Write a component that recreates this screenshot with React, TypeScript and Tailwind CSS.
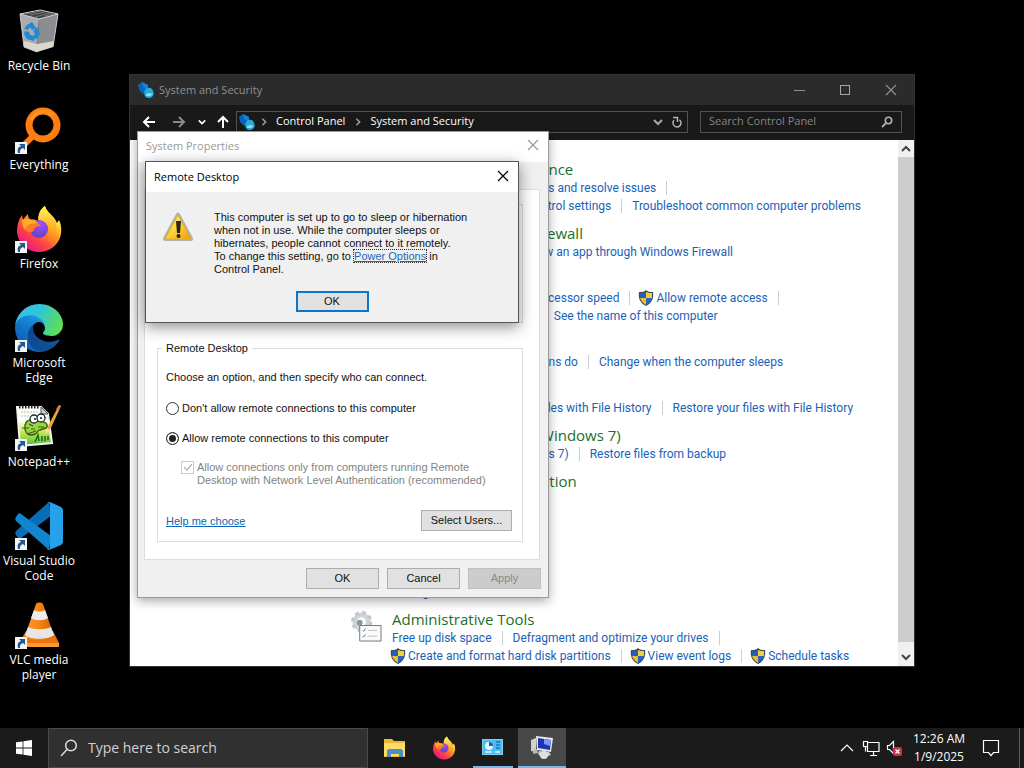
import React from 'react'

type IconProps = { className?: string }

type TaskLink = {
  label: string
  shield?: boolean
}

type Category = {
  title: string
  rows: TaskLink[][]
  trailing?: number[]
}

const categories: Category[] = [
  {
    title: 'Security and Maintenance',
    rows: [
      [{ label: "Review your computer's status and resolve issues" }],
      [
        { label: 'Change User Account Control settings', shield: true },
        { label: 'Troubleshoot common computer problems' },
      ],
    ],
    trailing: [0],
  },
  {
    title: 'Windows Defender Firewall',
    rows: [[{ label: 'Check firewall status' }, { label: 'Allow an app through Windows Firewall' }]],
  },
  {
    title: 'System',
    rows: [
      [
        { label: 'View amount of RAM and processor speed' },
        { label: 'Allow remote access', shield: true },
      ],
      [{ label: 'Launch remote assistance' }, { label: 'See the name of this computer' }],
    ],
    trailing: [0],
  },
  {
    title: 'Power Options',
    rows: [[{ label: 'Change what the power buttons do' }, { label: 'Change when the computer sleeps' }]],
  },
  {
    title: 'File History',
    rows: [
      [
        { label: 'Save backup copies of your files with File History' },
        { label: 'Restore your files with File History' },
      ],
    ],
  },
  {
    title: 'Backup and Restore (Windows 7)',
    rows: [[{ label: 'Backup and Restore (Windows 7)' }, { label: 'Restore files from backup' }]],
  },
  {
    title: 'BitLocker Drive Encryption',
    rows: [[{ label: 'Manage BitLocker' }]],
  },
  {
    title: 'Storage Spaces',
    rows: [[{ label: 'Manage Storage Spaces' }]],
  },
  {
    title: 'Work Folders',
    rows: [[{ label: 'Manage Work Folders' }]],
  },
  {
    title: 'Administrative Tools',
    rows: [
      [{ label: 'Free up disk space' }, { label: 'Defragment and optimize your drives' }],
      [
        { label: 'Create and format hard disk partitions', shield: true },
        { label: 'View event logs', shield: true },
        { label: 'Schedule tasks', shield: true },
      ],
    ],
    trailing: [0],
  },
]

const RecycleBinIcon = ({ className }: IconProps) => (
  <svg viewBox="0 0 48 48" className={className} aria-hidden="true">
    <path d="M5 7 24 12 22 45 9 40Z" fill="#a9abad" />
    <path d="M24 12 43 7 38 40 22 45Z" fill="#8b8d90" />
    <path d="M5 7 25 3 43 7 24 12Z" fill="#3f4143" stroke="#d4d6d8" strokeWidth="1" />
    <path d="m10 7 15-3m-10 4 15-3m-10 5 15-4M30 9l8-2" stroke="#75787b" strokeWidth="1" />
    <path d="m9 34 13 3 17-3-1 6-16 5-13-5Z" fill="#d9d8cf" />
    <path d="m12 18 5-3 4 6-4 2-2-3-2 3-4-1ZM22 20l3 7-3 5-4-1 2-4-2-3ZM10 24l4 1 1 3 5 1-1 5-7-2-3-5Z" fill="#2088d4" />
    <path d="M5 7 9 40 22 45M43 7l-5 33" fill="none" stroke="#c8cacc" strokeWidth="1" />
  </svg>
)

const EverythingIcon = ({ className }: IconProps) => (
  <svg viewBox="0 0 48 48" className={className} aria-hidden="true">
    <path d="M20 28 6 42" stroke="#ff7e0d" strokeWidth="6" />
    <circle cx="28" cy="19" r="14" fill="none" stroke="#ff7e0d" strokeWidth="7" />
    <path d="M16 14a14 14 0 0 1 22-5" fill="none" stroke="#ff9429" strokeWidth="3" />
  </svg>
)

const FirefoxIcon = ({ className }: IconProps) => (
  <svg viewBox="0 0 48 48" className={className} aria-hidden="true">
    <defs>
      <linearGradient id="ff-body" x1="0.85" y1="0.1" x2="0.2" y2="0.95">
        <stop offset="0.1" stopColor="#fff04a" />
        <stop offset="0.4" stopColor="#ff9a1f" />
        <stop offset="0.7" stopColor="#ff4048" />
        <stop offset="1" stopColor="#e31587" />
      </linearGradient>
      <radialGradient id="ff-globe" cx="0.6" cy="0.2" r="0.9">
        <stop offset="0" stopColor="#a14df0" />
        <stop offset="1" stopColor="#5a40cf" />
      </radialGradient>
      <linearGradient id="ff-tail" x1="0.5" y1="0" x2="0.6" y2="1">
        <stop offset="0" stopColor="#fff44f" />
        <stop offset="1" stopColor="#ff8f1e" />
      </linearGradient>
    </defs>
    <path
      d="M30 1c1 6 9 9 12 17l2-3c3 6 3 14 0 20C40 43 32 47 24 47 12 47 3 38 2 27c0-6 1-11 5-17l1 5c1-2 3-4 5-6 0 3 1 5 3 6 3-1 5 0 7 1 0-7 2-12 7-15Z"
      fill="url(#ff-body)"
    />
    <path d="M30 1c-5 4-7 9-6 14 10 2 16 9 13 18 4-3 5-8 4-13C40 12 32 8 30 1Z" fill="url(#ff-tail)" />
    <circle cx="24" cy="24" r="9" fill="url(#ff-globe)" />
    <path d="M7 15c5-2 11-1 16 3l3 3c-4 0-6 1-7 4-1 2-3 3-6 2-4-2-6-7-6-12Z" fill="#ff7b24" />
    <path d="M7 15c5-2 11-1 16 3l-8 1c-3 1-4 3-5 6-2-3-3-6-3-10Z" fill="#ffac2b" />
  </svg>
)

const EdgeIcon = ({ className }: IconProps) => (
  <svg viewBox="0 0 256 256" className={className} aria-hidden="true">
    <defs>
      <linearGradient id="edge-a" x1="0.2" y1="0.5" x2="1" y2="0.6">
        <stop offset="0" stopColor="#0c4a91" />
        <stop offset="1" stopColor="#145299" />
      </linearGradient>
      <linearGradient id="edge-b" x1="0.8" y1="0.1" x2="0.3" y2="1">
        <stop offset="0" stopColor="#1b9de2" />
        <stop offset="0.5" stopColor="#1472c8" />
        <stop offset="1" stopColor="#0a5bb0" />
      </linearGradient>
      <linearGradient id="edge-c" x1="0" y1="0.3" x2="1" y2="0.6">
        <stop offset="0" stopColor="#35c1f1" />
        <stop offset="0.45" stopColor="#2fc5d8" />
        <stop offset="1" stopColor="#5fe04e" />
      </linearGradient>
    </defs>
    <g transform="translate(-4.63 -4.92)">
      <path
        d="M235.68 195.46a93.73 93.73 0 0 1-10.54 4.71 101.87 101.87 0 0 1-35.9 6.46c-47.32 0-88.54-32.55-88.54-74.32A31.48 31.48 0 0 1 117.13 105c-42.8 1.8-53.8 46.4-53.8 72.53 0 73.88 68.09 81.37 82.76 81.37 7.91 0 19.84-2.3 27-4.56l1.31-.44a128.34 128.34 0 0 0 66.6-52.8 4 4 0 0 0-5.32-5.64Z"
        fill="url(#edge-a)"
      />
      <path
        d="M110.34 246.34A79.2 79.2 0 0 1 87.6 225a80.72 80.72 0 0 1 29.53-120c3.12-1.47 8.45-4.13 15.54-4a32.35 32.35 0 0 1 25.69 13 31.88 31.88 0 0 1 6.36 18.66c0-.21 24.46-79.6-80-79.6-43.9 0-80 41.66-80 78.21a130.15 130.15 0 0 0 12.11 56 128 128 0 0 0 156.38 67.11 75.55 75.55 0 0 1-62.78-8Z"
        fill="url(#edge-b)"
      />
      <path
        d="M156.94 153.78c-.81 1.05-3.3 2.5-3.3 5.66 0 2.61 1.7 5.12 4.72 7.23 14.38 10 41.49 8.68 41.56 8.68a59.56 59.56 0 0 0 30.27-8.35 61.38 61.38 0 0 0 30.43-52.88c.26-22.41-8-37.31-11.34-43.91C228.09 28.76 182.35 5 132.61 5a128 128 0 0 0-128 126.2c.48-36.54 36.8-66.05 80-66.05 3.5 0 23.46.34 42 10.07 16.34 8.58 24.9 18.94 30.85 29.21 6.18 10.67 7.28 24.15 7.28 29.52s-2.74 13.33-7.8 19.83Z"
        fill="url(#edge-c)"
      />
    </g>
  </svg>
)

const NotepadIcon = ({ className }: IconProps) => (
  <svg viewBox="0 0 48 48" className={className} aria-hidden="true">
    <defs>
      <linearGradient id="npp-page" x1="0" y1="0" x2="0" y2="1">
        <stop offset="0.35" stopColor="#fdfff6" />
        <stop offset="0.65" stopColor="#c4e84e" />
        <stop offset="1" stopColor="#4cb843" />
      </linearGradient>
    </defs>
    <path d="M2 4h24l7 7 4 29-32 3Z" fill="url(#npp-page)" stroke="#f4f4f4" strokeWidth="2" />
    <path d="M26 4v7h7Z" fill="#d0d0d0" stroke="#555" strokeWidth="1" />
    <path d="M4 4h21" stroke="#222" strokeWidth="3" strokeDasharray="1.5 1.5" />
    <path d="M6 9h18M6 13h8M30 15h4" stroke="#b9c3a8" strokeWidth="1" strokeDasharray="2 1" />
    <path d="M17 17c-5-1-8 4-7 9 1 6 6 7 10 5 3-1 2-4 5-4l6-2c3-2 0-6-3-6" fill="#9ad543" stroke="#3b5c14" strokeWidth="1.4" />
    <path d="M7 25h7M16 26h4M23 24h6M12 31l9-3M14 21l4 2" stroke="#3b5c14" strokeWidth="1.2" />
    <circle cx="19" cy="16" r="4" fill="#fff" stroke="#182b33" strokeWidth="1.3" />
    <circle cx="26" cy="15" r="4" fill="#fff" stroke="#182b33" strokeWidth="1.3" />
    <circle cx="20" cy="16" r="1" fill="#111" />
    <circle cx="26" cy="15" r="1" fill="#111" />
    <path d="m20 39 3-7 1 6m3-5v5m3-5v5m3-5v4" fill="none" stroke="#1f6a22" strokeWidth="1.5" />
    <path d="m30 32 2-7L44 2l2 1-11 24Z" fill="#e8a834" />
    <path d="m44 2 2 1-2 4-3-1Z" fill="#c97b68" />
    <path d="m30 32 2-7 3 2Z" fill="#f1dfae" />
  </svg>
)

const CodeIcon = ({ className }: IconProps) => (
  <svg viewBox="0 0 48 48" className={className} aria-hidden="true">
    <path d="M1 33c-1-1-1-3 0-4L34 0l2 14L6 36c-1 1-2 1-3 0Z" fill="#0b6db5" />
    <path d="M1 15c-1 1-1 3 0 4l33 29 2-14L6 12c-1-1-2-1-3 0Z" fill="#1185d0" />
    <path d="M34 48c-1 0-2 0-2-1 2 1 3 0 3-2V3c0-2-1-3-3-2 0-1 2-1 3-1l11 5c1 1 2 2 2 3v32c0 1-1 2-2 3Z" fill="#26a2ec" />
  </svg>
)

const VlcIcon = ({ className }: IconProps) => (
  <svg viewBox="0 0 48 48" className={className} aria-hidden="true">
    <defs>
      <linearGradient id="vlc-cone" x1="0" y1="0" x2="1" y2="0">
        <stop offset="0" stopColor="#ff9a2e" />
        <stop offset="0.4" stopColor="#f98a12" />
        <stop offset="1" stopColor="#d9610a" />
      </linearGradient>
    </defs>
    <path d="M11 30h27l6 12v4H4v-4Z" fill="#e8740b" />
    <path d="M4 42h40v4H4Z" fill="#fb9a33" />
    <path d="M21 3c1-2 6-2 7 0l11 32c-3 5-26 5-29 0Z" fill="url(#vlc-cone)" />
    <path d="M19 9c3 2 8 2 11 0l3 8c-4 3-13 3-17 0Z" fill="#ececec" />
    <path d="M13 26c6 3 17 3 23 0l3 8c-5 5-24 5-29 0Z" fill="#e6e6e6" />
  </svg>
)

const ShortcutArrow = () => (
  <svg viewBox="0 0 12 12" className="absolute bottom-0 left-0 size-3 bg-[#f4f4f4]" aria-hidden="true">
    <path d="M3 11c-1-4 0-6 3-7L4 2h6v6L8 6c-3 1-3 3-3 5Z" fill="#24588f" />
  </svg>
)

const SecurityIcon = ({ className }: IconProps) => (
  <svg viewBox="0 0 16 16" className={className} aria-hidden="true">
    <path d="M0 3 4 0l6 3v6l-5 3-4-4Z" fill="#0a62b5" />
    <path d="m4 0 6 3v5L5 5Z" fill="#1a80d6" />
    <path d="M7 8c2-3 7-3 8 1 2 4-1 7-4 7-4 0-6-4-4-8Z" fill="#1fb0e0" />
    <path d="m12 7-1 4 4 1-3 2H8v-2l3-1Z" fill="#86e3f4" />
  </svg>
)

const ShieldIcon = ({ className }: IconProps) => (
  <svg viewBox="0 0 16 16" className={className} aria-hidden="true">
    <path d="M8 0c2 2 4 2 7 2 1 6-1 11-7 14C2 13 0 8 1 2c3 0 5 0 7-2Z" fill="#3b4a5c" />
    <path d="M8 2v6H2V3c2 0 4 0 6-1Z" fill="#2560b8" />
    <path d="M8 2c2 1 4 1 6 1v5H8Z" fill="#f5cf3a" />
    <path d="M2 8h6v7C5 13 3 11 2 8Z" fill="#e9c02c" />
    <path d="M8 8h6c-1 3-3 5-6 7Z" fill="#2a66c4" />
  </svg>
)

const AdminToolsIcon = ({ className }: IconProps) => (
  <svg viewBox="0 0 32 32" className={className} aria-hidden="true">
    <circle cx="11" cy="11" r="7" fill="none" stroke="#cdd4d8" strokeWidth="5" />
    <circle cx="11" cy="11" r="9.5" fill="none" stroke="#bfc7cc" strokeWidth="3" strokeDasharray="4 3.5" />
    <circle cx="9" cy="12" r="3" fill="#8d979c" />
    <path d="M9 15h22v16H9Z" fill="#fbfbfb" stroke="#6e7478" />
    <path d="m12 20 1 1 2-3m-3 8 1 1 2-3" fill="none" stroke="#4d7dae" />
    <path d="M17 20h10m-10 6h10" stroke="#bcc2c6" />
  </svg>
)

const WarningIcon = ({ className }: IconProps) => (
  <svg viewBox="0 0 32 32" className={className} aria-hidden="true">
    <defs>
      <linearGradient id="warn" x1="0" y1="0" x2="1" y2="1">
        <stop offset="0.3" stopColor="#ffe94a" />
        <stop offset="1" stopColor="#f59a0c" />
      </linearGradient>
    </defs>
    <path d="M14 3c1-2 3-2 4 0l13 24c0 2 0 3-2 3H3c-2 0-2-1-2-3Z" fill="#b3b3ad" />
    <path d="M16 4 29 28H3Z" fill="url(#warn)" stroke="#e0ae1a" strokeWidth="1" />
    <path d="M14 10h5l-1 12h-3Z" fill="#26241c" />
    <circle cx="16.5" cy="25" r="2" fill="#26241c" />
  </svg>
)

const ExplorerIcon = ({ className }: IconProps) => (
  <svg viewBox="0 0 24 24" className={className} aria-hidden="true">
    <path d="M1 3h8l2 2h11v16H1Z" fill="#e9b93a" />
    <path d="M1 7h21v13H1Z" fill="#ffdc66" />
    <path d="M4 21v-6c0-1 1-2 2-2h12c1 0 2 1 2 2v6h-4v-3H8v3Z" fill="#4a8fc8" />
  </svg>
)

const ControlPanelIcon = ({ className }: IconProps) => (
  <svg viewBox="0 0 24 24" className={className} aria-hidden="true">
    <path d="M1 4h21v16H1Z" fill="#7fd0f5" />
    <path d="M2 5h19v14H2Z" fill="#4dbcf0" />
    <circle cx="8" cy="11" r="4" fill="#e8f8ff" />
    <path d="M8 7v4h4a4 4 0 0 0-4-4Z" fill="#1462a0" />
    <path d="M15 7h4M15 10h4M15 13h4" stroke="#1878b8" strokeWidth="1.5" />
    <path d="M4 17h7M14 17h5" stroke="#d9f3ff" strokeWidth="1.5" />
  </svg>
)

const SystemIcon = ({ className }: IconProps) => (
  <svg viewBox="0 0 24 24" className={className} aria-hidden="true">
    <path d="M1 5 6 3v14l-5-1Z" fill="#cfd2cd" />
    <path d="m6 1 17 2-2 14-14-2Z" fill="#e9eae6" />
    <path d="m8 3 13 2-1 10-12-2Z" fill="#1c35b8" />
    <path d="m14 4 7 1-1 6-6-2Z" fill="#7d9af0" />
    <path d="m3 15 4-1 1 4-5 1Z" fill="#b7bab5" />
    <path d="m9 16 10 1 2 3-9 3-4-4Z" fill="#cfd2ce" />
    <circle cx="14" cy="20" r="4" fill="#dfe2de" />
  </svg>
)

const CloseGlyph = ({ className }: IconProps) => (
  <svg viewBox="0 0 12 12" className={className} aria-hidden="true">
    <path d="m1 1 10 10M11 1 1 11" fill="none" stroke="currentColor" strokeWidth="1.2" />
  </svg>
)

const Chevron = ({ className }: IconProps) => (
  <svg viewBox="0 0 10 10" className={className} aria-hidden="true">
    <path d="m1 3 4 4 4-4" fill="none" stroke="currentColor" strokeWidth="2" />
  </svg>
)

const desktopIcons = [
  { name: 'Recycle Bin', icon: RecycleBinIcon, shortcut: false },
  { name: 'Everything', icon: EverythingIcon, shortcut: true },
  { name: 'Firefox', icon: FirefoxIcon, shortcut: true },
  { name: 'Microsoft Edge', icon: EdgeIcon, shortcut: true },
  { name: 'Notepad++', icon: NotepadIcon, shortcut: true },
  { name: 'Visual Studio Code', icon: CodeIcon, shortcut: true },
  { name: 'VLC media player', icon: VlcIcon, shortcut: true },
]

const DesktopIcons = () => (
  <ul className="flex w-[78px] flex-col">
    {desktopIcons.map(({ name, icon: Icon, shortcut }) => (
      <li key={name} className="h-[99px] pt-[7px]">
        <button className="flex w-full flex-col items-center gap-[3px] text-xs leading-[15px] text-white">
          <span className="relative">
            <Icon className="size-12" />
            {shortcut && <ShortcutArrow />}
          </span>
          <span>{name}</span>
        </button>
      </li>
    ))}
  </ul>
)

const Separator = () => <span className="mx-[10px] h-3.5 w-px bg-[#c9ced6]" />

const CategorySection = ({ category }: { category: Category }) => (
  <section>
    <h2 className="mb-0.5 text-[15px] leading-4 text-[#1b6f2c]">{category.title}</h2>
    {category.rows.map((row, rowIndex) => (
      <div key={rowIndex} className="flex h-[18px] items-center font-[Roboto,sans-serif] text-xs text-[#1a62b8]">
        {row.map((link, index) => (
          <React.Fragment key={link.label}>
            {index > 0 && <Separator />}
            <a href="#" className="flex items-center gap-0.5">
              {link.shield && <ShieldIcon className="-ml-0.5 size-4" />}
              {link.label}
            </a>
          </React.Fragment>
        ))}
        {category.trailing?.includes(rowIndex) && <Separator />}
      </div>
    ))}
  </section>
)

const ControlPanelWindow = () => (
  <section
    aria-label="System and Security"
    className="absolute top-[74px] left-[129px] flex h-[593px] w-[786px] flex-col border border-[#333] bg-[#191919]"
  >
    <header className="flex h-[30px] shrink-0 items-center bg-[#2b2b2b] text-[#8f8f8f]">
      <SecurityIcon className="ml-2 size-4" />
      <h1 className="ml-[5px] flex-1 text-[11px]">System and Security</h1>
      <button aria-label="Minimize" className="flex h-full w-[46px] items-center justify-center">
        <span className="h-px w-[11px] bg-[#8f8f8f]" />
      </button>
      <button aria-label="Maximize" className="flex h-full w-[46px] items-center justify-center">
        <span className="size-[10px] border border-[#a5a5a5]" />
      </button>
      <button aria-label="Close" className="flex h-full w-[46px] items-center justify-center">
        <CloseGlyph className="size-3" />
      </button>
    </header>

    <nav className="flex h-[35px] shrink-0 items-center pr-3 pb-0.5 text-[11px] text-white">
      <button aria-label="Back" className="ml-3 size-3.5">
        <svg viewBox="0 0 14 14" aria-hidden="true">
          <path d="M13 7H2m5-5L2 7l5 5" fill="none" stroke="currentColor" strokeWidth="2" />
        </svg>
      </button>
      <button aria-label="Forward" className="ml-4 size-3.5 text-[#8a8a8a]">
        <svg viewBox="0 0 14 14" aria-hidden="true">
          <path d="M1 7h11M7 2l5 5-5 5" fill="none" stroke="currentColor" strokeWidth="2" />
        </svg>
      </button>
      <button aria-label="Recent locations" className="ml-3">
        <Chevron className="size-2" />
      </button>
      <button aria-label="Up" className="ml-2.5 size-3.5">
        <svg viewBox="0 0 14 14" aria-hidden="true">
          <path d="M7 13V2M2 7l5-5 5 5" fill="none" stroke="currentColor" strokeWidth="2" />
        </svg>
      </button>
      <div className="ml-1.5 flex h-[22px] flex-1 items-center border border-[#535353] pr-1">
        <SecurityIcon className="ml-0.5 size-4" />
        <Chevron className="ml-[5px] size-2 -rotate-90 text-[#9a9a9a]" />
        <a href="#" className="ml-2">Control Panel</a>
        <Chevron className="ml-[9px] size-2 -rotate-90 text-[#9a9a9a]" />
        <a href="#" className="ml-2 flex-1">System and Security</a>
        <button aria-label="Previous locations" className="text-[#a8a8a8]">
          <Chevron className="size-2.5" />
        </button>
        <button aria-label="Refresh" className="ml-2 size-3 text-[#b5b5b5]">
          <svg viewBox="0 0 12 12" aria-hidden="true">
            <path d="M8.5 3.8a4 4 0 1 1-5.5.5M2 1.5h4.5V6" fill="none" stroke="currentColor" strokeWidth="1.5" />
          </svg>
        </button>
      </div>
      <form className="ml-3 flex h-[22px] w-[202px] items-center border border-[#535353] pr-2 pl-2">
        <input
          aria-label="Search Control Panel"
          placeholder="Search Control Panel"
          className="w-0 flex-1 bg-transparent outline-none placeholder:text-[#858585]"
        />
        <svg viewBox="0 0 12 12" className="size-3 text-[#b0b0b0]" aria-hidden="true">
          <circle cx="7.5" cy="4.5" r="3.2" fill="none" stroke="currentColor" strokeWidth="1.6" />
          <path d="m5 7-4 4" stroke="currentColor" strokeWidth="1.8" />
        </svg>
      </form>
    </nav>

    <div className="flex min-h-0 flex-1 bg-white">
      <main className="flex flex-1 flex-col gap-2.5 overflow-hidden pt-[21px] whitespace-nowrap">
        {categories.map((category, index) => (
          <div key={category.title} className="flex">
            <div className="flex w-[262px] shrink-0 pl-[221px]">
              {index === categories.length - 1 && <AdminToolsIcon className="size-[31px]" />}
            </div>
            <CategorySection category={category} />
          </div>
        ))}
      </main>
      <div className="flex w-4 flex-col items-center bg-[#f0f0f0] text-[#454545]">
        <button aria-label="Scroll up" className="flex h-[17px] items-center">
          <Chevron className="size-2.5 rotate-180" />
        </button>
        <div className="w-full flex-1 bg-[#cdcdcd]" />
        <button aria-label="Scroll down" className="flex h-6 items-center pt-1.5">
          <Chevron className="size-2.5" />
        </button>
      </div>
    </div>
  </section>
)

const dialogButton = 'h-[21px] border border-[#adadad] bg-[#e1e1e1]'

const SystemPropertiesWindow = () => (
  <section
    role="dialog"
    aria-label="System Properties"
    className="absolute top-[131px] left-[137px] flex w-[412px] flex-col border border-[#9b9b9b] bg-[#f0f0f0] font-['Liberation_Sans',Arial,sans-serif] text-[11px] leading-[13px] text-[#111] shadow-[0_3px_10px_rgba(0,0,0,0.35)]"
  >
    <header className="flex h-[30px] items-center justify-between bg-white pr-[9px] pb-1 pl-2 text-[#999]">
      <h2 className="font-['Open_Sans','Noto_Sans',sans-serif] text-[11px]">System Properties</h2>
      <button aria-label="Close">
        <CloseGlyph className="size-3" />
      </button>
    </header>
    <div className="pt-[27px] pr-2 pl-1.5">
      <div className="flex flex-col border border-[#dcdcdc] bg-white pt-2 pr-4 pb-[17px] pl-3">
        <fieldset aria-label="Remote Assistance" className="mt-1.5 h-[119px] border border-[#dcdcdc]" />

        <fieldset className="mt-[19px] flex flex-col border border-[#dcdcdc] px-2 pb-2.5">
          <legend className="-ml-1 px-1">Remote Desktop</legend>
          <p className="mt-4">Choose an option, and then specify who can connect.</p>
          <label className="mt-[18px] flex items-center gap-[3px]">
            <input
              type="radio"
              name="remote"
              className="size-[13px] appearance-none rounded-full border border-[#333] bg-white"
            />
            Don't allow remote connections to this computer
          </label>
          <label className="mt-[17px] flex items-center gap-[3px]">
            <input
              type="radio"
              name="remote"
              defaultChecked
              className="size-[13px] appearance-none rounded-full border border-[#333] bg-white checked:bg-[#222] checked:shadow-[inset_0_0_0_2px_white]"
            />
            Allow remote connections to this computer
          </label>
          <label className="mt-4 ml-[15px] flex items-start gap-[3px] text-[#838383]">
            <span className="relative flex">
              <input type="checkbox" disabled defaultChecked className="size-[13px] appearance-none border border-[#ccc] bg-white" />
              <svg viewBox="0 0 13 13" className="absolute inset-0" aria-hidden="true">
                <path d="m3 6 3 3 5-6" fill="none" stroke="#b5b5b5" strokeWidth="1.4" />
              </svg>
            </span>
            <span>
              Allow connections only from computers running Remote
              <br />
              Desktop with Network Level Authentication (recommended)
            </span>
          </label>
          <div className="mt-[23px] flex items-center justify-between pr-0.5">
            <a href="#" className="pt-0.5 text-[#0a66b8] underline">Help me choose</a>
            <button className={`${dialogButton} w-[91px]`}>Select Users...</button>
          </div>
        </fieldset>
      </div>
    </div>
    <footer className="flex justify-end gap-2 py-2 pr-[7px]">
      <button className={`${dialogButton} w-[73px]`}>OK</button>
      <button className={`${dialogButton} w-[73px]`}>Cancel</button>
      <button disabled className="h-[21px] w-[73px] border border-[#bfbfbf] bg-[#cccccc] text-[#8a8a8a]">Apply</button>
    </footer>
  </section>
)

const RemoteDesktopAlert = () => (
  <section
    role="alertdialog"
    aria-label="Remote Desktop"
    className="absolute top-[161px] left-[145px] flex w-[374px] flex-col border border-[#555] bg-[#f0f0f0] font-['Liberation_Sans',Arial,sans-serif] text-[11px] leading-[13px] text-[#111] shadow-[0_4px_14px_rgba(0,0,0,0.45)]"
  >
    <header className="flex h-[30px] items-center justify-between bg-white pr-[9px] pb-0.5 pl-2 text-black">
      <h2 className="font-['Open_Sans','Noto_Sans',sans-serif] text-[11px]">Remote Desktop</h2>
      <button aria-label="Close">
        <CloseGlyph className="size-3" />
      </button>
    </header>
    <div className="flex gap-5 pt-[19px] pl-4">
      <WarningIcon className="size-8" />
      <p>
        This computer is set up to go to sleep or hibernation
        <br />
        when not in use. While the computer sleeps or
        <br />
        hibernates, people cannot connect to it remotely.
        <br />
        To change this setting, go to{' '}
        <a href="#" className="text-[#1a66c0] underline outline-1 outline-dotted outline-[#333]">Power Options</a> in
        <br />
        Control Panel.
      </p>
    </div>
    <button className="mt-[15px] mb-2.5 h-[21px] w-[73px] self-center border-2 border-[#0b74cc] bg-[#e1e1e1]">OK</button>
  </section>
)

const Taskbar = () => (
  <footer className="flex h-10 shrink-0 items-stretch bg-[#1b1b1b] text-white">
    <button aria-label="Start" className="flex w-12 items-center justify-center">
      <svg viewBox="0 0 16 16" className="size-4" aria-hidden="true">
        <path d="M0 2.3 6.6 1.4v6.2H0ZM7.4 1.3 16 0v7.6H7.4ZM0 8.4h6.6v6.2L0 13.7ZM7.4 8.4H16V16l-8.6-1.3Z" fill="#fff" />
      </svg>
    </button>
    <label className="flex w-80 items-center gap-2.5 border border-[#4a4a4a] bg-[#303030] pl-[11px]">
      <svg viewBox="0 0 18 18" className="size-[18px]" aria-hidden="true">
        <circle cx="11" cy="6.5" r="5.3" fill="none" stroke="#dcdcdc" strokeWidth="1.5" />
        <path d="m7 10.5-6 6.5" stroke="#dcdcdc" strokeWidth="1.5" />
      </svg>
      <input
        aria-label="Search"
        placeholder="Type here to search"
        className="w-0 flex-1 bg-transparent text-sm outline-none placeholder:text-[#d0d0d0]"
      />
    </label>
    <div className="ml-[3px] flex flex-1 gap-px">
      <button aria-label="File Explorer" className="flex w-12 items-center justify-center">
        <ExplorerIcon className="size-6" />
      </button>
      <button aria-label="Firefox" className="flex w-12 items-center justify-center">
        <FirefoxIcon className="size-6" />
      </button>
      <button aria-label="Control Panel" className="flex w-12 flex-col items-center">
        <ControlPanelIcon className="my-auto size-6" />
        <span className="h-0.5 w-10 bg-[#76b9ed]" />
      </button>
      <button aria-label="System Properties" className="flex w-12 flex-col items-center bg-[#484848]">
        <SystemIcon className="my-auto size-6" />
        <span className="h-0.5 w-full bg-[#76b9ed]" />
      </button>
    </div>
    <div className="flex items-center">
      <button aria-label="Show hidden icons">
        <svg viewBox="0 0 14 14" className="size-3.5" aria-hidden="true">
          <path d="m1 10 6-6 6 6" fill="none" stroke="#fff" strokeWidth="1.2" />
        </svg>
      </button>
      <button aria-label="Network" className="ml-2">
        <svg viewBox="0 0 18 18" className="size-[18px]" aria-hidden="true">
          <path d="M5 3.5h12v9H5.5V8M8 16.5h7M11.5 12.5v4M1.5 2.5h4v5h-4ZM3.5 7.5v5" fill="none" stroke="#fff" strokeWidth="1.2" />
        </svg>
      </button>
      <button aria-label="Volume muted" className="ml-1.5">
        <svg viewBox="0 0 18 18" className="size-[18px]" aria-hidden="true">
          <path d="M1.5 6.5h2l4-4v12l-4-4h-2Z" fill="none" stroke="#fff" strokeWidth="1.2" />
          <rect x="7" y="8" width="9" height="9" rx="2" fill="#d42b3c" />
          <path d="m9.5 10.5 4 4m0-4-4 4" stroke="#fff" strokeWidth="1.4" />
        </svg>
      </button>
      <div className="ml-2 w-[54px] text-center text-xs leading-[18px] whitespace-nowrap">
        <p>12:26 AM</p>
        <p>1/9/2025</p>
      </div>
      <button aria-label="Notifications" className="mr-[19px] ml-4">
        <svg viewBox="0 0 18 18" className="size-[18px]" aria-hidden="true">
          <path d="M1.5 1.5h15v12h-5L9 16.5 6.5 13.5h-5Z" fill="none" stroke="#fff" strokeWidth="1.2" />
        </svg>
      </button>
      <button aria-label="Show desktop" className="h-10 w-[5px] border-l border-[#5a5a5a]" />
    </div>
  </footer>
)

const App = () => {
  return (
    <div className="flex h-screen flex-col overflow-hidden bg-black font-['Open_Sans','Noto_Sans',sans-serif]">
      <div className="relative min-h-0 flex-1">
        <DesktopIcons />
        <ControlPanelWindow />
        <SystemPropertiesWindow />
        <RemoteDesktopAlert />
      </div>
      <Taskbar />
    </div>
  )
}

export default App
